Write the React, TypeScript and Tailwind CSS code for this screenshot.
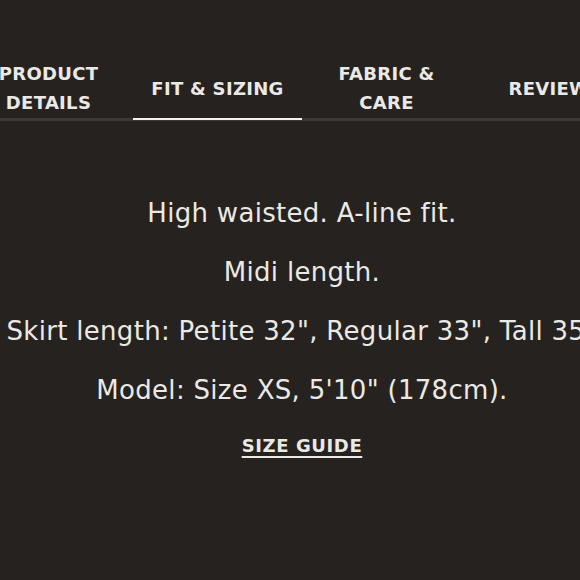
import React from "react";

const tabs = [
  { label: ["PRODUCT", "DETAILS"], active: false },
  { label: ["FIT & SIZING"], active: true },
  { label: ["FABRIC &", "CARE"], active: false },
  { label: ["REVIEWS"], active: false },
];

export default function App() {
  return (
    <div
      className="w-[580px] h-[580px] overflow-hidden bg-[#25221f] text-[#ebe9e6]"
      style={{ fontFamily: '"DejaVu Sans", "Open Sans", sans-serif' }}
    >
      <div className="ml-[-36px] w-[676px] pt-[58px]">
        <div className="flex border-b-[3px] border-[#3b3835]">
          {tabs.map((t, i) => (
            <div
              key={i}
              className="relative w-[169px] h-[60px] flex flex-col items-center justify-center text-[18px] leading-[29px] font-bold tracking-[0.3px] whitespace-nowrap"
            >
              {t.label.map((l) => (
                <span key={l}>{l}</span>
              ))}
              {t.active && (
                <div className="absolute left-0 right-0 bottom-[-2px] h-[2px] bg-[#f2f1ef]" />
              )}
            </div>
          ))}
        </div>
        <div className="flex flex-col items-center pt-[77px] text-[26px] leading-[30px] gap-[29px] whitespace-nowrap tracking-[0.3px]">
          <p>High waisted. A-line fit.</p>
          <p>Midi length.</p>
          <p>Skirt length: Petite 32", Regular 33", Tall 35"</p>
          <p>Model: Size XS, 5'10" (178cm).</p>
          <a className="text-[18px] leading-[24px] font-bold tracking-[0.6px] underline decoration-2 underline-offset-[4px]">
            SIZE GUIDE
          </a>
        </div>
      </div>
    </div>
  );
}
